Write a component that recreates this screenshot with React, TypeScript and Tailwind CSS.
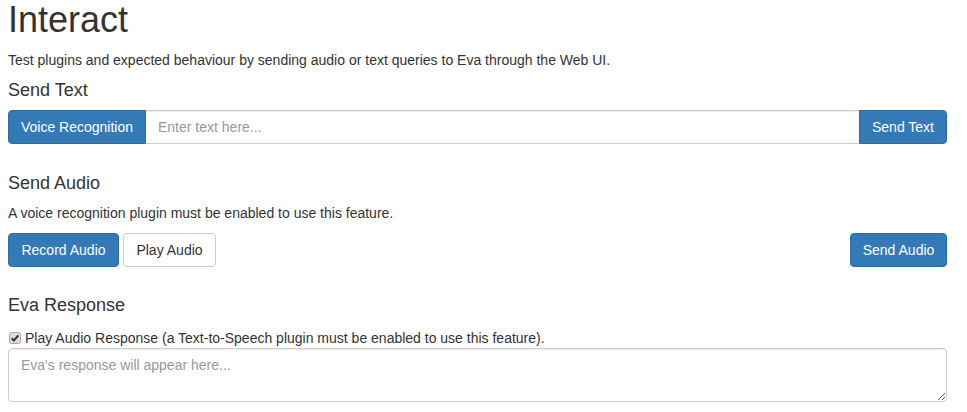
import * as React from "react";

const btnPrimary =
  "inline-flex items-center justify-center whitespace-nowrap h-[34px] px-0 text-[14px] text-white bg-[#337ab7] border border-[#2e6da4]";
const btnDefault =
  "inline-flex items-center justify-center whitespace-nowrap h-[34px] px-0 text-[14px] text-[#333] bg-white border border-[#ccc] rounded";

function CheckIcon() {
  return (
    <svg width="12" height="12" viewBox="0 0 12 12" className="shrink-0">
      <rect x="0.5" y="0.5" width="11" height="11" rx="2" fill="#dcdcdc" stroke="#a9a9a9" />
      <path d="M2.7 6.3 L4.9 8.6 L9.3 3.3" fill="none" stroke="#333" strokeWidth="2" />
    </svg>
  );
}

export default function App() {
  return (
    <div
      className="bg-white text-[#333] text-[14px] leading-[20px] pl-2 pr-5 pb-2"
      style={{ fontFamily: '"Liberation Sans", Arial, sans-serif' }}
    >
      <h1 className="text-[36px] leading-[39.6px] font-normal mb-[10px]">Interact</h1>
      <p className="mb-[10px]">
        Test plugins and expected behaviour by sending audio or text queries to Eva through the Web UI.
      </p>

      <h4 className="text-[18px] leading-[20px] mb-[10px]">Send Text</h4>
      <div className="flex h-[34px]">
        <button className={`${btnPrimary} rounded-l shrink-0 w-[138px]`}>Voice Recognition</button>
        <input
          className="flex-1 min-w-0 h-[34px] px-3 border-y border-[#ccc] text-[14px] placeholder:text-[#999] outline-none shadow-[inset_0_1px_1px_rgba(0,0,0,0.075)]"
          placeholder="Enter text here..."
        />
        <button className={`${btnPrimary} rounded-r shrink-0 w-[88px]`}>Send Text</button>
      </div>

      <h4 className="text-[18px] leading-[20px] mt-[29px] mb-[10px]">Send Audio</h4>
      <p className="mb-[10px]">A voice recognition plugin must be enabled to use this feature.</p>
      <div className="flex items-center">
        <button className={`${btnPrimary} rounded w-[111px]`}>Record Audio</button>
        <button className={`${btnDefault} ml-1 w-[93px]`}>Play Audio</button>
        <button className={`${btnPrimary} rounded ml-auto w-[97px]`}>Send Audio</button>
      </div>

      <h4 className="text-[18px] leading-[20px] mt-[28px] mb-[13px]">Eva Response</h4>
      <label className="flex items-center gap-[4px] pl-[1px]">
        <CheckIcon />
        <span>Play Audio Response (a Text-to-Speech plugin must be enabled to use this feature).</span>
      </label>
      <textarea
        className="block w-full h-[54px] px-3 py-[6px] border border-[#ccc] rounded text-[14px] leading-[20px] placeholder:text-[#999] outline-none shadow-[inset_0_1px_1px_rgba(0,0,0,0.075)]"
        placeholder="Eva's response will appear here..."
      />
    </div>
  );
}
